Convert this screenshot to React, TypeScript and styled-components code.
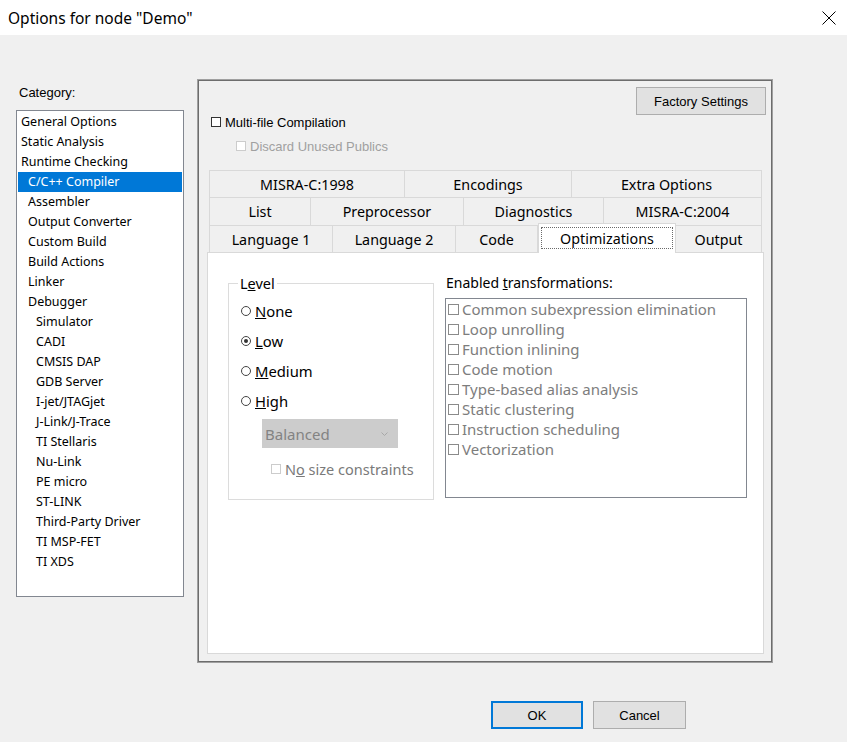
import * as React from "react";
import styled, {createGlobalStyle} from "styled-components";

const GlobalStyle = createGlobalStyle`
  html, body {
    margin: 0;
    padding: 0;
    background: #f0f0f0;
  }
  * {
    box-sizing: border-box;
  }
`;

const uiFont = `"Noto Sans", "Open Sans", sans-serif`;
const oldFont = `"Liberation Sans", Arial, sans-serif`;

const Window = styled.div`
  width: 847px;
  height: 742px;
  background: #f0f0f0;
  font-family: ${uiFont};
  color: #000;
  overflow: hidden;
`;

const TitleBar = styled.div`
  height: 35px;
  background: #fff;
  display: flex;
  align-items: center;
  justify-content: space-between;
  padding: 0 11px 0 8px;
  font-size: 15.5px;
`;

const CloseIcon = () => (
    <svg width="14" height="14" viewBox="0 0 14 14">
        <path d="M0.5 0.5 L13.5 13.5 M13.5 0.5 L0.5 13.5" stroke="#000" strokeWidth="1" fill="none"/>
    </svg>
);

const Body = styled.div`
  display: flex;
  padding: 44px 0 0 16px;
  gap: 13px;
`;

const LeftColumn = styled.div`
  width: 168px;
  display: flex;
  flex-direction: column;
`;

const Label = styled.div`
  font-family: ${oldFont};
  font-size: 13px;
  line-height: 16px;
  padding: 6px 0 0 3px;
  margin-bottom: 9px;
`;

const CategoryList = styled.div`
  height: 487px;
  background: #fff;
  border: 1px solid #828790;
  padding: 1px 0;
`;

const CategoryItem = styled.div<{ $level: number; $selected?: boolean }>`
  height: 20px;
  line-height: 20px;
  margin: 0 1px;
  font-size: 12.5px;
  padding-left: ${p => [3, 10, 18][p.$level]}px;
  background: ${p => p.$selected ? "#0078d7" : "transparent"};
  color: ${p => p.$selected ? "#fff" : "#000"};
  white-space: nowrap;
`;

const Panel = styled.div`
  width: 576px;
  height: 584px;
  border: 1px solid #a0a0a0;
  box-shadow: inset 0 0 0 1px #6d6d6d;
  padding: 7px 6px 0 9px;
  display: flex;
  flex-direction: column;
`;

const TopRow = styled.div`
  display: flex;
  justify-content: flex-end;
`;

const PushButton = styled.button<{ $width: number; $default?: boolean }>`
  width: ${p => p.$width}px;
  height: 28px;
  background: #e1e1e1;
  border: 1px solid ${p => p.$default ? "#0078d7" : "#adadad"};
  box-shadow: ${p => p.$default ? "inset 0 0 0 1px #0078d7" : "none"};
  font-family: ${oldFont};
  font-size: 13px;
  color: #000;
  padding: 0;
`;

const CheckRow = styled.div<{ $indent: number; $top: number; $disabled?: boolean }>`
  display: flex;
  align-items: center;
  height: 14px;
  margin-left: ${p => p.$indent}px;
  margin-top: ${p => p.$top}px;
  font-family: ${oldFont};
  font-size: 13px;
  color: ${p => p.$disabled ? "#a0a0a0" : "#000"};
  gap: 4px;
`;

const Box = styled.span<{ $color: string; $size?: number }>`
  width: ${p => p.$size ?? 10}px;
  height: ${p => p.$size ?? 10}px;
  border: 1px solid ${p => p.$color};
  background: #fff;
  flex: none;
`;

const TabControl = styled.div`
  width: 557px;
  margin-top: 17px;
  display: flex;
  flex-direction: column;
`;

const TabRow = styled.div<{ $height: number }>`
  display: flex;
  height: ${p => p.$height}px;
  margin: 0 2px;
  align-items: flex-end;
`;

const Tab = styled.div<{ $width: number; $active?: boolean }>`
  width: ${p => p.$width}px;
  height: ${p => p.$active ? "calc(100% + 3px)" : "100%"};
  margin-bottom: ${p => p.$active ? "-1px" : "0"};
  position: relative;
  z-index: ${p => p.$active ? 1 : 0};
  display: flex;
  align-items: center;
  justify-content: center;
  background: ${p => p.$active ? "#fff" : "#f0f0f0"};
  border-top: 1px solid #d9d9d9;
  border-right: 1px solid #d9d9d9;
  border-left: ${p => p.$active ? "1px solid #d9d9d9" : "none"};
  &:first-child {
    border-left: 1px solid #d9d9d9;
  }
  font-size: 14.3px;
  padding: ${p => p.$active ? "3px 2px 4px" : "0"};
  white-space: nowrap;
`;

const FocusRect = styled.span`
  flex: 1;
  align-self: stretch;
  display: flex;
  align-items: center;
  justify-content: center;
  border: 1px dotted #6a6a6a;
`;

const TabPage = styled.div`
  height: 402px;
  background: #fff;
  border: 1px solid #d9d9d9;
  padding: 22px 0 0 20px;
  display: flex;
  align-items: flex-start;
`;

const GroupBox = styled.fieldset`
  width: 206px;
  height: 225px;
  margin: 0;
  padding: 0 0 0 12px;
  border: 1px solid #dcdcdc;
  min-width: 0;
`;

const Legend = styled.legend`
  font-size: 14.5px;
  line-height: 16px;
  padding: 0 2px;
  margin-left: -3px;
`;

const RadioList = styled.div`
  margin-top: 5px;
  display: flex;
  flex-direction: column;
`;

const RadioRow = styled.div`
  height: 30px;
  display: flex;
  align-items: center;
  gap: 4px;
  font-size: 14.8px;
`;

const RadioCircle = styled.span<{ $checked?: boolean }>`
  width: 10px;
  height: 10px;
  border-radius: 50%;
  border: 1px solid #444;
  display: flex;
  align-items: center;
  justify-content: center;
  &::after {
    content: "";
    width: 4px;
    height: 4px;
    border-radius: 50%;
    background: ${p => p.$checked ? "#333" : "transparent"};
  }
`;

const Combo = styled.div`
  width: 136px;
  height: 29px;
  margin: 3px 0 0 21px;
  background: #cccccc;
  display: flex;
  align-items: center;
  justify-content: space-between;
  padding: 0 10px 0 3px;
  font-size: 15px;
  color: #838383;
`;

const SubCheck = styled.div`
  display: flex;
  align-items: center;
  gap: 4px;
  height: 20px;
  margin: 11px 0 0 30px;
  font-size: 14.5px;
  color: #7a7a7a;
`;

const RightColumn = styled.div`
  margin-left: 11px;
  display: flex;
  flex-direction: column;
`;

const ColumnLabel = styled.div`
  font-size: 14px;
  line-height: 16px;
  padding-left: 1px;
  margin-bottom: 7px;
`;

const TransformList = styled.div`
  width: 302px;
  height: 200px;
  border: 1px solid #828790;
  background: #fff;
  padding: 0 0 0 2px;
`;

const TransformItem = styled.div`
  height: 20px;
  display: flex;
  align-items: center;
  gap: 3px;
  font-size: 15px;
  color: #7d7d7d;
  white-space: nowrap;
`;

const ButtonRow = styled.div`
  display: flex;
  gap: 10px;
  margin-top: 38px;
  padding-left: 491px;
`;

const categories: Array<[string, number]> = [
    ["General Options", 0],
    ["Static Analysis", 0],
    ["Runtime Checking", 0],
    ["C/C++ Compiler", 1],
    ["Assembler", 1],
    ["Output Converter", 1],
    ["Custom Build", 1],
    ["Build Actions", 1],
    ["Linker", 1],
    ["Debugger", 1],
    ["Simulator", 2],
    ["CADI", 2],
    ["CMSIS DAP", 2],
    ["GDB Server", 2],
    ["I-jet/JTAGjet", 2],
    ["J-Link/J-Trace", 2],
    ["TI Stellaris", 2],
    ["Nu-Link", 2],
    ["PE micro", 2],
    ["ST-LINK", 2],
    ["Third-Party Driver", 2],
    ["TI MSP-FET", 2],
    ["TI XDS", 2],
];

const tabRows: Array<{ height: number; tabs: Array<[string, number]> }> = [
    {height: 27, tabs: [["MISRA-C:1998", 196], ["Encodings", 167], ["Extra Options", 190]]},
    {height: 28, tabs: [["List", 102], ["Preprocessor", 153], ["Diagnostics", 140], ["MISRA-C:2004", 158]]},
    {height: 27, tabs: [["Language 1", 124], ["Language 2", 123], ["Code", 82], ["Optimizations", 138], ["Output", 86]]},
];

const levels: Array<[string, string, boolean]> = [
    ["N", "one", false],
    ["L", "ow", true],
    ["M", "edium", false],
    ["H", "igh", false],
];

const transformations = [
    "Common subexpression elimination",
    "Loop unrolling",
    "Function inlining",
    "Code motion",
    "Type-based alias analysis",
    "Static clustering",
    "Instruction scheduling",
    "Vectorization",
];

export default function App() {
    return (
        <Window>
            <GlobalStyle/>
            <TitleBar>
                <span>Options for node "Demo"</span>
                <CloseIcon/>
            </TitleBar>
            <Body>
                <LeftColumn>
                    <Label>Category:</Label>
                    <CategoryList>
                        {categories.map(([name, level]) => (
                            <CategoryItem key={name} $level={level} $selected={name === "C/C++ Compiler"}>
                                {name}
                            </CategoryItem>
                        ))}
                    </CategoryList>
                </LeftColumn>
                <Panel>
                    <TopRow>
                        <PushButton $width={130}>Factory Settings</PushButton>
                    </TopRow>
                    <CheckRow $indent={4} $top={0}>
                        <Box $color="#333"/>
                        Multi-file Compilation
                    </CheckRow>
                    <CheckRow $indent={29} $top={10} $disabled>
                        <Box $color="#cccccc"/>
                        Discard Unused Publics
                    </CheckRow>
                    <TabControl>
                        {tabRows.map((row, i) => (
                            <TabRow key={i} $height={row.height}>
                                {row.tabs.map(([name, width]) => (
                                    name === "Optimizations"
                                        ? (
                                            <Tab key={name} $width={width} $active>
                                                <FocusRect>{name}</FocusRect>
                                            </Tab>
                                        )
                                        : <Tab key={name} $width={width}>{name}</Tab>
                                ))}
                            </TabRow>
                        ))}
                        <TabPage>
                            <GroupBox>
                                <Legend>L<u>e</u>vel</Legend>
                                <RadioList>
                                    {levels.map(([key, rest, checked]) => (
                                        <RadioRow key={key}>
                                            <RadioCircle $checked={checked}/>
                                            <span><u>{key}</u>{rest}</span>
                                        </RadioRow>
                                    ))}
                                </RadioList>
                                <Combo>
                                    <span>Balanced</span>
                                    <svg width="7" height="4" viewBox="0 0 7 4">
                                        <path d="M0.5 0.5 L3.5 3.5 L6.5 0.5" stroke="#a8a8a8" fill="none"/>
                                    </svg>
                                </Combo>
                                <SubCheck>
                                    <Box $color="#cccccc"/>
                                    <span>N<u>o</u> size constraints</span>
                                </SubCheck>
                            </GroupBox>
                            <RightColumn>
                                <ColumnLabel>Enabled <u>t</u>ransformations:</ColumnLabel>
                                <TransformList>
                                    {transformations.map(t => (
                                        <TransformItem key={t}>
                                            <Box $color="#8a8a8a" $size={11}/>
                                            {t}
                                        </TransformItem>
                                    ))}
                                </TransformList>
                            </RightColumn>
                        </TabPage>
                    </TabControl>
                </Panel>
            </Body>
            <ButtonRow>
                <PushButton $width={92} $default>OK</PushButton>
                <PushButton $width={93}>Cancel</PushButton>
            </ButtonRow>
        </Window>
    );
}
